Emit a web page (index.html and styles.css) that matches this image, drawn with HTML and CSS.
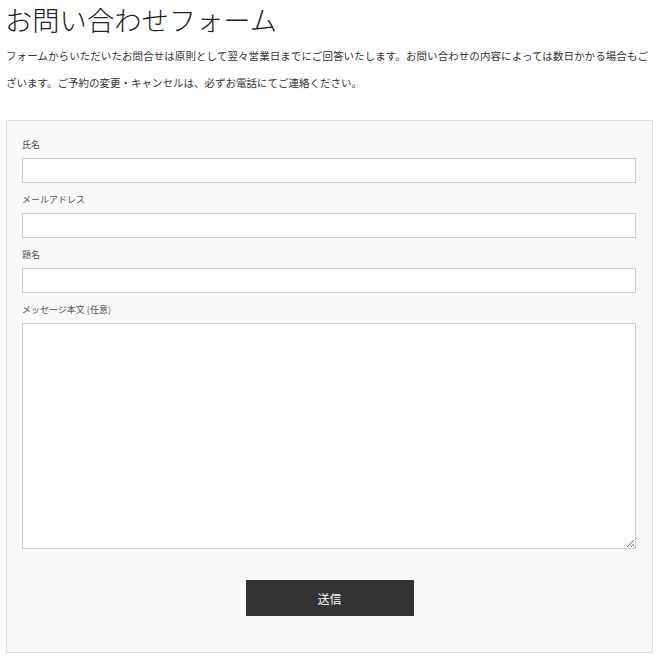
FILE: index.html
```html
<!DOCTYPE html>
<html lang="ja">
<head>
<meta charset="utf-8">
<title>お問い合わせフォーム</title>
<link rel="stylesheet" href="styles.css">
</head>
<body>
<div class="page">
  <h1 class="title">お問い合わせフォーム</h1>
  <p class="lead">フォームからいただいたお問合せは原則として翌々営業日までにご回答いたします。お問い合わせの内容によっては数日かかる場合もございます。ご予約の変更・キャンセルは、必ずお電話にてご連絡ください。</p>
  <form class="form-box">
    <div class="field">
      <label class="label">氏名</label>
      <input class="input" type="text">
    </div>
    <div class="field">
      <label class="label">メールアドレス</label>
      <input class="input" type="text">
    </div>
    <div class="field">
      <label class="label">題名</label>
      <input class="input" type="text">
    </div>
    <div class="field">
      <label class="label">メッセージ本文 (任意)</label>
      <textarea class="textarea"></textarea>
    </div>
    <div class="actions">
      <button class="submit" type="button">送信</button>
    </div>
  </form>
</div>
</body>
</html>
```
FILE: styles.css
```css
html, body {
  margin: 0;
  padding: 0;
  background: #fff;
}
body {
  font-family: "Noto Sans CJK JP", "Noto Sans", sans-serif;
  color: #333;
}
.page {
  width: 647px;
  padding: 0 6px;
}
.title {
  margin: 0 0 0 -1px;
  font-size: 27.3px;
  font-weight: 300;
  line-height: 38px;
  color: #222;
}
.lead {
  margin: 4px 0 24px;
  padding-right: 5px;
  font-size: 10.5px;
  line-height: 27px;
  color: #333;
  text-align: justify;
}
.form-box {
  box-sizing: border-box;
  width: 647px;
  border: 1px solid #ddd;
  background: #f9f9f9;
  padding: 17px 15px 36px 15px;
}
.field {
  display: flex;
  flex-direction: column;
  margin-bottom: 10px;
}
.label {
  font-size: 9px;
  line-height: 14px;
  color: #555;
  margin-bottom: 6px;
}
.input {
  box-sizing: border-box;
  width: 614px;
  height: 25px;
  border: 1px solid #ccc;
  background: #fff;
  margin: 0;
  padding: 0 6px;
  outline: none;
}
.textarea {
  box-sizing: border-box;
  width: 614px;
  height: 226px;
  border: 1px solid #ccc;
  background: #fff;
  margin: 0;
  padding: 4px 6px;
  resize: vertical;
  outline: none;
}
.actions {
  display: flex;
  justify-content: center;
  padding-top: 21px;
}
.submit {
  width: 168px;
  height: 36px;
  border: none;
  background: #333;
  color: #fff;
  font-family: "Noto Sans CJK JP", sans-serif;
  font-size: 12px;
  cursor: pointer;
}
```
